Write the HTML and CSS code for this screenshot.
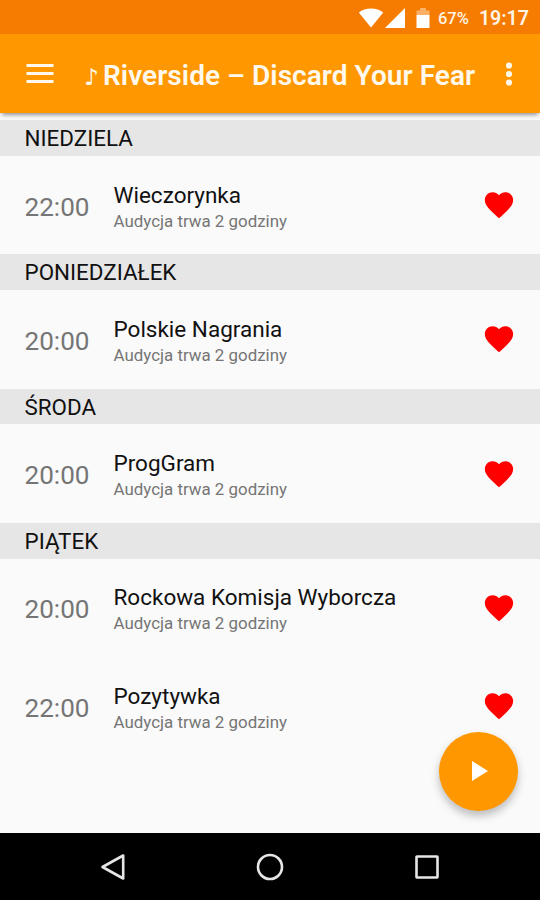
FILE: index.html
```html
<!DOCTYPE html>
<html lang="pl">
<head>
    <meta charset="UTF-8">
    <meta name="viewport" content="width=device-width, initial-scale=1.0">
    <title>Riverside – Discard Your Fear</title>
    <link rel="stylesheet" href="styles.css">
</head>
<body>
    <svg class="symbols" aria-hidden="true">
        <symbol id="heart" viewBox="0 0 24 24">
            <path d="M12 21.35l-1.45-1.32C5.4 15.36 2 12.28 2 8.5 2 5.42 4.42 3 7.5 3c1.74 0 3.41.81 4.5 2.09C13.09 3.81 14.76 3 16.5 3 19.58 3 22 5.42 22 8.5c0 3.78-3.4 6.86-8.55 11.54L12 21.35z"/>
        </symbol>
    </svg>

    <div class="status-bar">
        <svg class="wifi" width="26" height="20" viewBox="0 0 26 20">
            <path d="M0.8 4.6C4 1.8 8.3 0.4 13 0.4s9 1.4 12.2 4.2L13 19.6z"/>
        </svg>
        <svg class="signal" width="20" height="20" viewBox="0 0 20 20">
            <path d="M0 20L20 0v20z"/>
        </svg>
        <svg class="battery" width="14" height="20" viewBox="0 0 14 20">
            <path class="battery-empty" d="M4 0h6v2.5h3.5V7H0.5V2.5H4z"/>
            <path d="M0.5 7h13v13h-13z"/>
        </svg>
        <span class="battery-level">67%</span>
        <span class="clock">19:17</span>
    </div>

    <header class="toolbar">
        <button class="menu-btn" aria-label="Menu">
            <svg width="28" height="20" viewBox="0 0 28 20">
                <path d="M0.5 0h27v3h-27zM0.5 8h27v3h-27zM0.5 16h27v3h-27z"/>
            </svg>
        </button>
        <h1><span class="note">♪</span>Riverside – Discard Your Fear</h1>
        <button class="more-btn" aria-label="Więcej">
            <svg width="8" height="24" viewBox="0 0 8 24">
                <circle cx="4" cy="3.5" r="3.1"/>
                <circle cx="4" cy="12" r="3.1"/>
                <circle cx="4" cy="20.5" r="3.1"/>
            </svg>
        </button>
    </header>

    <main class="schedule">
        <h2>NIEDZIELA</h2>
        <div class="show">
            <span class="time">22:00</span>
            <div class="info">
                <div class="name">Wieczorynka</div>
                <div class="duration">Audycja trwa 2 godziny</div>
            </div>
            <svg class="heart"><use href="#heart"/></svg>
        </div>

        <h2>PONIEDZIAŁEK</h2>
        <div class="show">
            <span class="time">20:00</span>
            <div class="info">
                <div class="name">Polskie Nagrania</div>
                <div class="duration">Audycja trwa 2 godziny</div>
            </div>
            <svg class="heart"><use href="#heart"/></svg>
        </div>

        <h2>ŚRODA</h2>
        <div class="show">
            <span class="time">20:00</span>
            <div class="info">
                <div class="name">ProgGram</div>
                <div class="duration">Audycja trwa 2 godziny</div>
            </div>
            <svg class="heart"><use href="#heart"/></svg>
        </div>

        <h2>PIĄTEK</h2>
        <div class="show">
            <span class="time">20:00</span>
            <div class="info">
                <div class="name">Rockowa Komisja Wyborcza</div>
                <div class="duration">Audycja trwa 2 godziny</div>
            </div>
            <svg class="heart"><use href="#heart"/></svg>
        </div>
        <div class="show">
            <span class="time">22:00</span>
            <div class="info">
                <div class="name">Pozytywka</div>
                <div class="duration">Audycja trwa 2 godziny</div>
            </div>
            <svg class="heart"><use href="#heart"/></svg>
        </div>

        <button class="play-btn" aria-label="Odtwarzaj">
            <svg width="16" height="20" viewBox="0 0 16 20">
                <path d="M0 0l16 10L0 20z"/>
            </svg>
        </button>
    </main>

    <nav class="nav-bar">
        <svg width="28" height="30" viewBox="0 0 28 30">
            <path d="M24.2 3.5v23L3.5 15z"/>
        </svg>
        <svg width="28" height="30" viewBox="0 0 28 30">
            <circle cx="14" cy="15" r="12"/>
        </svg>
        <svg width="28" height="30" viewBox="0 0 28 30">
            <rect x="3.5" y="4.5" width="21" height="21" rx="0.5"/>
        </svg>
    </nav>
</body>
</html>
```

FILE: styles.css
```css
* {
    box-sizing: border-box;
}

body {
    font-family: Roboto, sans-serif;
    display: flex;
    flex-direction: column;
    width: 540px;
    height: 900px;
    margin: 0;
    overflow: hidden;
    background-color: #fafafa;
    color: #111;
}

button {
    display: flex;
    padding: 0;
    border: none;
    background: none;
    cursor: pointer;
}

.symbols {
    display: none;
}

.status-bar {
    display: flex;
    align-items: center;
    flex: none;
    height: 34px;
    padding: 1px 11px 0 0;
    justify-content: flex-end;
    background-color: #f57c00;
    color: #fff3e6;
    fill: #fff;
}

.signal {
    margin-left: 1px;
}

.battery {
    margin: 0 8px 0 11px;
}

.battery-empty {
    fill: #fab066;
}

.battery-level {
    margin-top: 1px;
    font-size: 16.5px;
    font-weight: 500;
}

.clock {
    font-size: 19.6px;
    font-weight: 600;
    margin: 2px 0 0 10px;
}

.toolbar {
    display: flex;
    align-items: center;
    flex: none;
    height: 79px;
    padding: 0 27px 0 26px;
    background-color: #ff9800;
    box-shadow: 0 4px 4px -2px rgba(0, 0, 0, 0.4);
    color: #fff8ec;
    fill: #fff8ec;
    z-index: 1;
}

.toolbar h1 {
    flex: 1;
    margin: 6px 0 0 30px;
    font-size: 28px;
    font-weight: 600;
    letter-spacing: 0.06px;
    line-height: 32px;
    white-space: nowrap;
}

.note {
    display: inline-block;
    width: 19px;
    font-family: "DejaVu Sans", sans-serif;
    font-size: 23px;
    font-weight: 400;
}

.schedule {
    position: relative;
    flex: 1;
    padding-top: 7px;
}

.schedule h2 {
    height: 35.8px;
    margin: 0;
    padding-left: 24.5px;
    background-color: #e6e6e6;
    font-size: 22.4px;
    font-weight: 400;
    line-height: 37.6px;
}

.show {
    display: flex;
    align-items: center;
    height: 98.5px;
    padding: 0 24px 0 24.5px;
}

.time {
    width: 89px;
    padding-top: 3px;
    color: #757575;
    font-size: 26.1px;
}

.info {
    flex: 1;
    padding-top: 4px;
}

.name {
    font-size: 22.5px;
    line-height: 28px;
}

.duration {
    color: #757575;
    font-size: 16.9px;
    line-height: 25px;
}

.heart {
    width: 34px;
    height: 34px;
    fill: #f00;
}

.play-btn {
    position: absolute;
    right: 22px;
    bottom: 22.5px;
    align-items: center;
    justify-content: center;
    width: 79px;
    height: 79px;
    padding-left: 3px;
    border-radius: 50%;
    background-color: #ff9800;
    box-shadow: 0 5px 9px rgba(0, 0, 0, 0.25);
    fill: #fff;
}

.nav-bar {
    display: flex;
    align-items: center;
    flex: none;
    justify-content: space-between;
    height: 67px;
    padding: 0 99px;
    background-color: #000;
    fill: none;
    stroke: #e6e6e6;
    stroke-width: 2.6;
    stroke-linejoin: round;
}
```
